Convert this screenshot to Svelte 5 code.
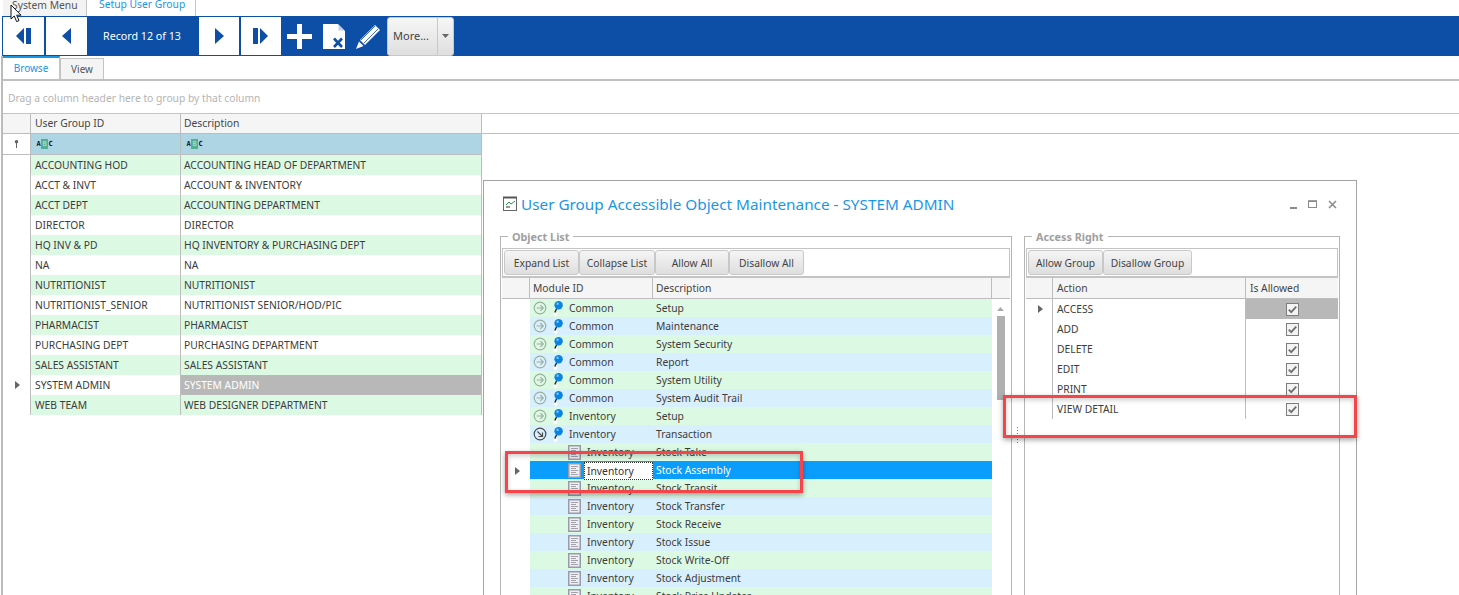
<script>
  const groups = [
    ['ACCOUNTING HOD', 'ACCOUNTING HEAD OF DEPARTMENT'],
    ['ACCT & INVT', 'ACCOUNT & INVENTORY'],
    ['ACCT DEPT', 'ACCOUNTING DEPARTMENT'],
    ['DIRECTOR', 'DIRECTOR'],
    ['HQ INV & PD', 'HQ INVENTORY & PURCHASING DEPT'],
    ['NA', 'NA'],
    ['NUTRITIONIST', 'NUTRITIONIST'],
    ['NUTRITIONIST_SENIOR', 'NUTRITIONIST SENIOR/HOD/PIC'],
    ['PHARMACIST', 'PHARMACIST'],
    ['PURCHASING DEPT', 'PURCHASING DEPARTMENT'],
    ['SALES ASSISTANT', 'SALES ASSISTANT'],
    ['SYSTEM ADMIN', 'SYSTEM ADMIN'],
    ['WEB TEAM', 'WEB DESIGNER DEPARTMENT']
  ];
  const objects = [
    ['p', 'Common', 'Setup'],
    ['p', 'Common', 'Maintenance'],
    ['p', 'Common', 'System Security'],
    ['p', 'Common', 'Report'],
    ['p', 'Common', 'System Utility'],
    ['p', 'Common', 'System Audit Trail'],
    ['p', 'Inventory', 'Setup'],
    ['o', 'Inventory', 'Transaction'],
    ['c', 'Inventory', 'Stock Take'],
    ['s', 'Inventory', 'Stock Assembly'],
    ['c', 'Inventory', 'Stock Transit'],
    ['c', 'Inventory', 'Stock Transfer'],
    ['c', 'Inventory', 'Stock Receive'],
    ['c', 'Inventory', 'Stock Issue'],
    ['c', 'Inventory', 'Stock Write-Off'],
    ['c', 'Inventory', 'Stock Adjustment'],
    ['c', 'Inventory', 'Stock Price Updater']
  ];
  const actions = ['ACCESS', 'ADD', 'DELETE', 'EDIT', 'PRINT', 'VIEW DETAIL'];
</script>

{#snippet caret()}
  <svg class="caret" width="5" height="8" viewBox="0 0 5 8"><path d="M0 0L5 4L0 8Z" fill="#666" /></svg>
{/snippet}

{#snippet abc()}
  <span class="abc"><b>A</b><b class="mid">B</b><b>C</b></span>
{/snippet}

{#snippet pin()}
  <svg class="pin" width="10" height="15" viewBox="0 0 10 15">
    <circle cx="2.5" cy="13" r="2" fill="#fff" />
    <path d="M4 7L1.8 11.5" stroke="#222" stroke-width="1.4" />
    <circle cx="5.6" cy="4.2" r="4.2" fill="#0a84e0" />
    <circle cx="4.6" cy="2.8" r="1.2" fill="#7cc6f6" />
  </svg>
{/snippet}

{#snippet circleArrow(open)}
  {#if open}
    <svg class="arrow" width="14" height="14" viewBox="0 0 14 14" fill="none" stroke="#4a4a4a" stroke-width="1.2">
      <circle cx="7" cy="7" r="5.8" />
      <path d="M4.5 4.5L9.3 9.3M9.5 5.5V9.5H5.5" />
    </svg>
  {:else}
    <svg class="arrow" width="14" height="14" viewBox="0 0 14 14" fill="none" stroke="#9cb09f" stroke-width="1.2">
      <circle cx="7" cy="7" r="5.8" />
      <path d="M3.6 7H10M7.4 4.2L10.2 7L7.4 9.8" />
    </svg>
  {/if}
{/snippet}

{#snippet doc()}
  <svg class="doc" width="13" height="15" viewBox="0 0 13 15">
    <rect x=".75" y=".75" width="11.5" height="13.5" fill="#eeeef6" stroke="#9a9aa8" stroke-width="1.5" />
    <path d="M3 3.5H10M3 5.5H8M3 7.5H10M3 9.5H8M3 11.5H10" stroke="#a2a2a8" />
  </svg>
{/snippet}

{#snippet check()}
  <svg class="check" width="13" height="13" viewBox="0 0 13 13">
    <rect x=".5" y=".5" width="12" height="12" fill="#f3f3f3" stroke="#7d7d7d" />
    <path d="M2.8 6.6L5.2 9.2L10.2 3.6" fill="none" stroke="#707070" stroke-width="1.8" />
  </svg>
{/snippet}

<div class="page">
  <div class="tabs">
    <div class="tab">System Menu</div>
    <div class="tab active">Setup User Group</div>
  </div>

  <div class="toolbar">
    <div class="navbtn">
      <svg width="16" height="16" viewBox="0 0 16 16" fill="#0d4ea6"><path d="M8 0L0 8L8 16ZM10 0H15V16H10Z" /></svg>
    </div>
    <div class="navbtn">
      <svg width="9" height="16" viewBox="0 0 9 16" fill="#0d4ea6"><path d="M9 0L0 8L9 16Z" /></svg>
    </div>
    <div class="record">Record 12 of 13</div>
    <div class="navbtn narrow">
      <svg width="9" height="16" viewBox="0 0 9 16" fill="#0d4ea6"><path d="M0 0L9 8L0 16Z" /></svg>
    </div>
    <div class="navbtn narrow">
      <svg width="16" height="16" viewBox="0 0 16 16" fill="#0d4ea6"><path d="M0 0H5V16H0ZM7 0L15 8L7 16Z" /></svg>
    </div>
    <svg class="ico-plus" width="25" height="25" viewBox="0 0 25 25" fill="#fff"><path d="M10 0H15V10H25V15H15V25H10V15H0V10H10Z" /></svg>
    <svg class="ico-doc" width="22" height="25" viewBox="0 0 22 25">
      <path d="M0 0H15L22 7V25H0Z" fill="#fff" />
      <path d="M15.5 1L21 6.5H15.5Z" fill="#bcd0e8" />
      <path d="M11 14.5L19 23M19 14.5L11 23" stroke="#0d4ea6" stroke-width="2.6" />
    </svg>
    <svg class="ico-pen" width="25" height="25" viewBox="0 0 25 25" fill="#fff">
      <path d="M19 1L24 6L9 21L4 16Z" />
      <path d="M3 17.5L7.5 22L0 25Z" />
      <path d="M5 16L19 2M8 19L22 5" stroke="#0d4ea6" stroke-width=".8" />
    </svg>
    <div class="more">
      <span class="more-label">More...</span>
      <span class="more-drop"><svg width="7" height="4" viewBox="0 0 7 4"><path d="M0 0H7L3.5 4Z" fill="#666" /></svg></span>
    </div>
  </div>

  <div class="subtabs">
    <div class="subtab active">Browse</div>
    <div class="subtab">View</div>
  </div>

  <div class="main">
    <div class="grouppanel">Drag a column header here to group by that column</div>
    <div class="grid-head main-cols">
      <div class="hc"></div>
      <div class="hc">User Group ID</div>
      <div class="hc">Description</div>
      <div class="hc last"></div>
    </div>
    <div class="filter main-cols-narrow">
      <div class="ind">
        <svg width="5" height="8" viewBox="0 0 5 8"><circle cx="2.5" cy="1.8" r="1.8" fill="#666" /><path d="M2.5 3V8" stroke="#666" /></svg>
      </div>
      <div class="fc">{@render abc()}</div>
      <div class="fc">{@render abc()}</div>
    </div>
    {#each groups as g, i}
      <div class="row main-cols-narrow" class:even={i % 2 === 0}>
        <div class="ind">{#if i === 11}{@render caret()}{/if}</div>
        <div class="cell">{g[0]}</div>
        <div class="cell" class:selgrey={i === 11}>{g[1]}</div>
      </div>
    {/each}
  </div>

  <section class="window">
    <header class="win-title">
      <svg class="win-ico" width="16" height="16" viewBox="0 0 16 16">
        <rect x="1.5" y="1.5" width="13" height="13" fill="#fff" stroke="#666" />
        <path d="M1 1.5H15" stroke="#555" stroke-width="2" />
        <path d="M4 9L7 6L9 8L13 5" fill="none" stroke="#1c9a4a" />
        <path d="M4 11H8" stroke="#333" />
      </svg>
      <h1>User Group Accessible Object Maintenance - SYSTEM ADMIN</h1>
      <div class="win-ctl">
        <svg width="9" height="9" viewBox="0 0 9 9"><path d="M1 8H8" stroke="#8a8a8a" stroke-width="2" /></svg>
        <svg width="10" height="9" viewBox="0 0 10 9" fill="none"><rect x=".5" y="1" width="8" height="6.5" stroke="#8a8a8a" /><path d="M0 1.2H9" stroke="#8a8a8a" stroke-width="1.6" /></svg>
        <svg width="9" height="9" viewBox="0 0 9 9"><path d="M1 1L8 8M8 1L1 8" stroke="#8a8a8a" stroke-width="1.5" /></svg>
      </div>
    </header>

    <div class="win-body">
      <fieldset class="group left">
        <legend>Object List</legend>
        <div class="btnbar">
          <button class="w75">Expand List</button>
          <button class="w76">Collapse List</button>
          <button class="w74">Allow All</button>
          <button class="w75">Disallow All</button>
        </div>
        <div class="grid-head obj-cols">
          <div class="hc"></div>
          <div class="hc">Module ID</div>
          <div class="hc">Description</div>
          <div class="hc last"></div>
        </div>
        <div class="obj-body">
          <div class="obj-rows">
            {#each objects as o, i}
              <div class="orow" class:green={i % 2 === 0} class:sel={o[0] === 's'}>
                <div class="oind">{#if o[0] === 's'}{@render caret()}{/if}</div>
                <div class="omod">
                  {#if o[0] === 'p' || o[0] === 'o'}
                    {@render circleArrow(o[0] === 'o')}
                    {@render pin()}
                    <span class="mtext">{o[1]}</span>
                  {:else}
                    {@render doc()}
                    <span class="mtext child" class:focus={o[0] === 's'}>{o[1]}</span>
                  {/if}
                </div>
                <div class="odesc">{o[2]}</div>
              </div>
            {/each}
          </div>
          <div class="scroll">
            <svg class="up" width="7" height="4" viewBox="0 0 7 4"><path d="M0 4H7L3.5 0Z" fill="#aaa" /></svg>
            <div class="thumb"></div>
          </div>
        </div>
      </fieldset>

      <div class="splitter"></div>

      <fieldset class="group right">
        <legend>Access Right</legend>
        <div class="btnbar">
          <button class="w75">Allow Group</button>
          <button class="w89">Disallow Group</button>
        </div>
        <div class="grid-head act-cols">
          <div class="hc"></div>
          <div class="hc">Action</div>
          <div class="hc last">Is Allowed</div>
        </div>
        {#each actions as a, i}
          <div class="arow act-cols">
            <div class="aind">{#if i === 0}{@render caret()}{/if}</div>
            <div class="acell">{a}</div>
            <div class="achk" class:greychk={i === 0}>{@render check()}</div>
          </div>
        {/each}
      </fieldset>
    </div>
  </section>

  <div class="mark m1"></div>
  <div class="mark m2"></div>

  <svg class="cursor" width="13" height="19" viewBox="0 0 13 19">
    <path d="M1 1V15L4.3 12L6.6 17.6L9 16.6L6.7 11.2H11Z" fill="#fff" stroke="#111" stroke-width="1" />
  </svg>
</div>

<style>
  :global(body) {
    margin: 0;
    background: #fff;
  }
  .page {
    position: relative;
    width: 1459px;
    height: 595px;
    overflow: hidden;
    background: #fff;
    font-family: "Noto Sans", "DejaVu Sans", sans-serif;
    font-size: 10.3px;
    color: #3c3c3c;
  }
  .tabs {
    display: flex;
    height: 16px;
    padding-left: 3px;
    gap: 1px;
  }
  .tab {
    width: 84px;
    height: 16px;
    box-sizing: border-box;
    background: #f3f3f3;
    border-right: 1px solid #c4c4c4;
    padding-left: 9px;
    line-height: 11px;
    color: #555;
  }
  .tab.active {
    width: 108px;
    background: #fff;
    padding-left: 11px;
    line-height: 9px;
    color: #1a96e6;
  }
  .toolbar {
    display: flex;
    align-items: center;
    height: 40px;
    margin-left: 2px;
    background: #0d4ea6;
    padding-left: 1px;
  }
  .navbtn {
    width: 41px;
    height: 38px;
    margin-right: 2px;
    background: #fff;
    display: flex;
    align-items: center;
    justify-content: center;
  }
  .navbtn.narrow { width: 40px; }
  .record {
    width: 110px;
    padding-left: 14px;
    box-sizing: border-box;
    color: #fff;
    font-size: 10.7px;
  }
  .ico-plus { margin-left: 4px; }
  .ico-doc { margin-left: 11px; }
  .ico-pen { margin-left: 11px; }
  .more {
    margin-left: 6px;
    display: flex;
    width: 67px;
    height: 39px;
    background: linear-gradient(#f6f6f6, #dfdfdf);
    border: 1px solid #c8c8c8;
    box-sizing: border-box;
    border-radius: 3px;
    color: #444;
    font-size: 11px;
  }
  .more-label {
    width: 50px;
    border-right: 1px solid #c8c8c8;
    padding-left: 5px;
    box-sizing: border-box;
    line-height: 35px;
  }
  .more-drop {
    flex: 1;
    display: flex;
    align-items: center;
    justify-content: center;
  }
  .subtabs {
    display: flex;
    height: 25px;
    margin-left: 1px;
    border-left: 2px solid #bbb;
    border-bottom: 2px solid #c0c0c0;
    box-sizing: border-box;
  }
  .subtab {
    width: 44px;
    height: 21px;
    margin-top: 2px;
    background: #f4f4f4;
    border: 1px solid #c4c4c4;
    border-bottom: 0;
    box-sizing: border-box;
    text-align: center;
    line-height: 21px;
    color: #555;
    font-size: 10px;
  }
  .subtab.active {
    width: 57px;
    height: 23px;
    margin-top: 0;
    background: #fff;
    border: 0;
    border-top: 2px solid #1a96e6;
    border-right: 1px solid #c4c4c4;
    line-height: 21px;
    color: #1a96e6;
  }
  .main {
    margin-left: 1px;
    border-left: 2px solid #bbb;
    height: 514px;
    box-sizing: border-box;
  }
  .grouppanel {
    height: 32px;
    line-height: 35px;
    padding-left: 5px;
    color: #b4b4b4;
    border-bottom: 1px solid #c4c4c4;
  }
  .grid-head {
    display: grid;
    background: #f5f5f5;
    border-bottom: 1px solid #bdbdbd;
    box-sizing: border-box;
    height: 21px;
  }
  .hc {
    border-right: 1px solid #bdbdbd;
    padding-left: 4px;
    line-height: 19px;
    color: #444;
    white-space: nowrap;
  }
  .hc.last { border-right: 0; }
  .obj-cols .hc, .act-cols .hc { line-height: 20px; }
  .obj-cols .hc { padding-left: 3px; }
  .main-cols .hc:nth-child(3) { padding-left: 3px; }
  .main-cols {
    grid-template-columns: 28px 150px 301px 1fr;
    height: 20px;
  }
  .main-cols .hc.last { background: #fff; }
  .main-cols-narrow {
    display: grid;
    grid-template-columns: 28px 150px 301px;
    width: 479px;
  }
  .filter {
    height: 21px;
    background: #add5e4;
    border-bottom: 1px solid #bdbdbd;
    box-sizing: border-box;
  }
  .ind {
    display: flex;
    align-items: center;
    justify-content: center;
    border-right: 1px solid #bdbdbd;
    background: #fff;
  }
  .fc {
    border-right: 1px solid #bdbdbd;
    padding-left: 5px;
    display: flex;
    align-items: center;
  }
  .abc {
    display: inline-flex;
    font-family: "DejaVu Sans Mono", monospace;
    font-size: 7px;
    color: #111;
  }
  .abc b {
    width: 5px;
    height: 10px;
    text-align: center;
    line-height: 10px;
  }
  .abc .mid {
    width: 7px;
    background: #54ae94;
    color: #a5d8c6;
  }
  .row {
    height: 20px;
    background: #fff;
  }
  .row.even .cell { background: #dcf9e4; }
  .cell {
    border-right: 1px solid #bdbdbd;
    padding-left: 4px;
    line-height: 21px;
    white-space: nowrap;
    overflow: hidden;
  }
  .cell:nth-child(3) { padding-left: 3px; }
  .cell.selgrey {
    background: #b8b8b8;
    color: #fff;
  }
  .caret { margin-left: 2px; }
  .window {
    position: absolute;
    left: 483px;
    top: 180px;
    width: 874px;
    height: 440px;
    box-sizing: border-box;
    background: #fff;
    border: 1px solid #a3a3a3;
  }
  .win-title {
    display: flex;
    align-items: center;
    height: 48px;
    box-sizing: border-box;
    padding: 0 0 2px 18px;
  }
  .win-ico { margin-right: 3px; }
  h1 {
    margin: 0;
    font-weight: 400;
    font-size: 15.3px;
    color: #1a96e6;
    white-space: nowrap;
  }
  .win-ctl {
    margin-left: auto;
    margin-right: 19px;
    display: flex;
    gap: 10px;
    align-items: center;
  }
  .win-body {
    display: flex;
    padding: 1px 0 0 16px;
  }
  .group {
    margin: 0;
    padding: 0 1px;
    border: 1px solid #b5b5b5;
    height: 380px;
    box-sizing: border-box;
    min-width: 0;
  }
  .group.left { width: 512px; }
  .group.right { width: 316px; }
  .splitter {
    width: 12px;
    position: relative;
  }
  .splitter::before {
    content: "";
    position: absolute;
    left: 5px;
    top: 197px;
    width: 1px;
    height: 16px;
    background: repeating-linear-gradient(#777 0 1px, transparent 1px 3px);
  }
  legend {
    margin-left: 6px;
    padding: 0 4px;
    font-weight: 700;
    font-size: 10.8px;
    line-height: 13px;
    color: #a0a0a0;
  }
  .btnbar {
    display: flex;
    height: 30px;
    margin-top: 5px;
    padding: 1px 0 0 1px;
    box-sizing: border-box;
    border: 1px solid #c4c4c4;
    border-bottom: 2px solid #c4c4c4;
  }
  button {
    width: 74px;
    height: 25px;
    padding: 0;
    font: inherit;
    color: #444;
    background: linear-gradient(#f5f5f5, #dedede);
    border: 1px solid #c8c8c8;
    border-radius: 3px;
  }
  .w74 { width: 74px; }
  .w75 { width: 75px; }
  .w76 { width: 76px; }
  .w89 { width: 89px; }
  .obj-cols { grid-template-columns: 28px 123px 339px 1fr; }
  .act-cols {
    display: grid;
    grid-template-columns: 27px 193px 1fr;
  }
  .obj-body { display: flex; }
  .obj-rows { width: 490px; flex: none; }
  .orow {
    display: grid;
    grid-template-columns: 28px 123px 1fr;
    height: 18px;
    line-height: 19px;
    background: #d8effe;
  }
  .orow.green { background: #dcf9e4; }
  .oind {
    background: #fff;
    display: flex;
    align-items: center;
    justify-content: center;
  }
  .omod {
    display: flex;
    align-items: center;
    padding-left: 3px;
    white-space: nowrap;
  }
  .mtext { line-height: 17px; }
  .arrow { margin-right: 6px; flex: none; margin-top: -1px; }
  .pin { margin-right: 6px; flex: none; }
  .doc { margin-left: 35px; margin-right: 6px; flex: none; margin-top: -1px; }
  .mtext.focus {
    background: #fff;
    color: #333;
    outline: 1px dotted #333;
    outline-offset: -1px;
    flex: 1;
    margin-left: -3px;
    padding: 0 0 0 3px;
    height: 18px;
    line-height: 18px;
  }
  .odesc { padding-left: 3px; white-space: nowrap; }
  .orow.sel { background: #0a9dfb; }
  .orow.sel .odesc { color: #fff; }
  .scroll {
    width: 17px;
    position: relative;
    flex: none;
  }
  .up { position: absolute; left: 5px; top: 8px; }
  .thumb {
    position: absolute;
    left: 5px;
    top: 17px;
    width: 8px;
    height: 84px;
    background: #b0b0b0;
  }
  .arow { height: 20px; line-height: 20px; }
  .aind {
    display: flex;
    align-items: center;
    justify-content: center;
    border-right: 1px solid #bdbdbd;
  }
  .acell {
    border-right: 1px solid #bdbdbd;
    padding-left: 4px;
  }
  .achk {
    display: flex;
    align-items: center;
    justify-content: center;
  }
  .achk.greychk { background: #b8b8b8; }
  .mark {
    position: absolute;
    border: 3px solid #f5444a;
    box-shadow: 0 2px 5px rgba(0, 0, 0, 0.35), inset 0 2px 5px rgba(0, 0, 0, 0.2);
    box-sizing: border-box;
  }
  .m1 { left: 505px; top: 451px; width: 298px; height: 42px; }
  .m2 { left: 1003px; top: 395px; width: 354px; height: 43px; }
  .cursor { position: absolute; left: 10px; top: 4px; }
</style>
